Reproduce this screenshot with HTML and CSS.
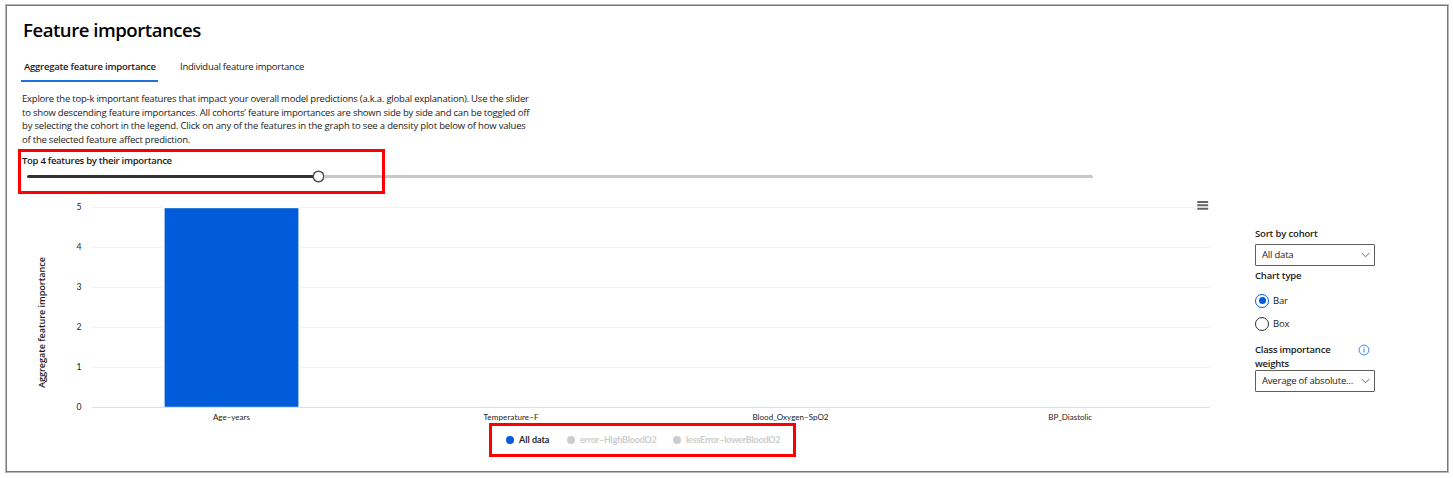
FILE: index.html
```html
<!DOCTYPE html>
<html lang="en">
<head>
<meta charset="utf-8">
<title>Feature importances</title>
<link rel="stylesheet" href="styles.css">
</head>
<body>
<main class="frame">
  <section class="panel">
    <h1 class="title">Feature importances</h1>
    <nav class="tabs">
      <a class="tab tab-active">Aggregate feature importance</a>
      <a class="tab">Individual feature importance</a>
    </nav>
    <p class="intro">
      <span class="line-1">Explore the top-k important features that impact your overall model predictions (a.k.a. global explanation). Use the slider</span><br>
      <span class="line-2">to show descending feature importances. All cohorts’ feature importances are shown side by side and can be toggled off</span><br>
      <span class="line-3">by selecting the cohort in the legend. Click on any of the features in the graph to see a density plot below of how values</span><br>
      <span class="line-4">of the selected feature affect prediction.</span>
    </p>
    <div class="slider-block">
      <div class="label slider-label">Top 4 features by their importance</div>
      <div class="slider"><div class="slider-fill"></div><div class="slider-thumb"></div><div class="slider-rest"></div></div>
      <div class="highlight highlight-slider"></div>
    </div>
    <div class="body">
      <div class="chart">
        <svg class="plot" width="1213" height="232" viewBox="7 194 1213 232">
          <g class="grid">
            <path d="M92 207.5H1194M92 247.5H1210M92 287.5H1210M92 327.5H1210M92 367.5H1210"/>
          </g>
          <path class="axis" d="M92 407.4H1210"/>
          <rect class="bar-halo" x="163" y="206" width="137" height="201"/>
          <rect class="bar" x="164.6" y="208.2" width="133.8" height="198.6"/>
          <g class="tick">
            <text x="79" y="210.3">5</text><text x="79" y="250.3">4</text><text x="79" y="290.3">3</text>
            <text x="79" y="330.3">2</text><text x="79" y="370.3">1</text><text x="79" y="410.3">0</text>
          </g>
          <g class="category">
            <text x="231.4" y="419.8" textLength="37">Age–years</text>
            <text x="511" y="419.8" textLength="55">Temperature–F</text>
            <text x="790.5" y="419.8" textLength="76">Blood_Oxygen–SpO2</text>
            <text x="1070.2" y="419.8" textLength="44">BP_Diastolic</text>
          </g>
          <text class="axis-title" transform="translate(44.6 322.5) rotate(-90)" textLength="131">Aggregate feature importance</text>
          <path class="menu" d="M1197.2 202H1208.2M1197.2 205.3H1208.2M1197.2 208.7H1208.2"/>
        </svg>
        <div class="legend">
          <div class="legend-item item-all"><i class="dot dot-on"></i><span>All data</span></div>
          <div class="legend-item item-high off"><i class="dot"></i><span>error–HighBloodO2</span></div>
          <div class="legend-item off"><i class="dot"></i><span>lessError–lowerBloodO2</span></div>
        </div>
      </div>
      <aside class="options">
        <div class="label">Sort by cohort</div>
        <div class="select"><span>All data</span><svg class="chevron" width="9" height="6" viewBox="0 0 9 6"><path d="M.5 .8L4.5 4.8L8.5 .8"/></svg></div>
        <div class="label type-label">Chart type</div>
        <div class="radio radio-on"><i></i><span>Bar</span></div>
        <div class="radio"><i></i><span>Box</span></div>
        <div class="weights">
          <div class="label weights-label">Class importance<br>weights</div>
          <svg class="info" width="12" height="12" viewBox="0 0 12 12"><circle cx="6" cy="6" r="4.9"/><path d="M6 5.1V8.6M6 3.2V4.2"/></svg>
        </div>
        <div class="select"><span>Average of absolute...</span><svg class="chevron" width="9" height="6" viewBox="0 0 9 6"><path d="M.5 .8L4.5 4.8L8.5 .8"/></svg></div>
      </aside>
    </div>
  </section>
</main>
</body>
</html>
```
FILE: styles.css
```css
* { box-sizing: border-box; }
body { margin: 0; background: #fff; color: #222120; font: 9.5px/14px "Open Sans", "Noto Sans", sans-serif; letter-spacing: -.2px; }
.frame { width: 1444px; height: 469px; margin: 4px 0 0 5px; border: 1px solid #b8b8b8; }
.panel { height: 467px; border: 1px solid #777; display: flex; flex-direction: column; }
.title { margin: 12px 0 0 16px; font-size: 18.6px; line-height: 24px; height: 24px; font-weight: 600; color: #000; letter-spacing: -.48px; white-space: nowrap; }
.tabs { display: flex; margin: 14px 0 0 14px; height: 26px; gap: 14px; }
.tab { height: 25.5px; padding: 3.5px 3px 0; white-space: nowrap; letter-spacing: -.25px; }
.tab-active { width: 137px; font-weight: 600; color: #1b1a19; border-bottom: 2px solid #1f6fe0; letter-spacing: -.23px; }
.tab + .tab { padding-left: 8px; }
.intro { margin: 10px 0 0 15px; line-height: 13.6px; height: 61px; white-space: nowrap; }
.line-1 { letter-spacing: -.215px; }
.line-2 { letter-spacing: -.2px; }
.line-3 { letter-spacing: -.18px; }
.line-4 { letter-spacing: -.22px; }
.label { font-weight: 600; color: #1b1a19; white-space: nowrap; letter-spacing: -.17px; }
.slider-block { position: relative; height: 41px; }
.slider-label { margin: .6px 0 0 15px; height: 14px; letter-spacing: -.28px; }
.slider { display: flex; align-items: center; width: 1066px; height: 12px; margin: 3px 0 0 20px; }
.slider-fill { width: 286px; height: 3px; border-radius: 2px 0 0 2px; background: #333; }
.slider-thumb { width: 11px; height: 11px; border: 1.5px solid #444; border-radius: 50%; background: #fff; box-shadow: 0 0 0 .5px #444; }
.slider-rest { flex: 1; height: 3px; border-radius: 0 2px 2px 0; background: #c8c8c8; }
.highlight { position: absolute; border: 3px solid #f00; }
.highlight-slider { left: 11px; top: -4px; width: 367px; height: 45px; }
.body { display: flex; }
.chart { width: 1220px; }
.plot { display: block; }
.plot text { font-family: "Open Sans", "Noto Sans", sans-serif; text-anchor: middle; fill: #222120; letter-spacing: 0; }
.grid path { stroke: #f1f1f1; fill: none; }
.axis { stroke: #d9dcec; }
.bar-halo { fill: #fff; }
.bar { fill: #015cda; }
.plot .tick text { font-family: Lato, sans-serif; font-size: 8.6px; }
.plot .category text { font-family: Lato, sans-serif; font-size: 8px; }
.plot .axis-title { font-size: 9.2px; font-weight: 600; fill: #1b1a19; }
.menu { stroke: #666; stroke-width: 1.9; }
.legend { display: flex; align-items: center; width: 307px; height: 34px; margin: -3px 0 0 482px; padding-left: 14px; border: 3px solid #f00; font: 700 9px/14px Lato, sans-serif; letter-spacing: -.2px; white-space: nowrap; color: #292827; }
.legend-item { display: flex; align-items: center; gap: 5px; }
.item-all { width: 61px; letter-spacing: 0; }
.item-high { width: 106px; }
.off { color: #ccc; }
.dot { width: 8px; height: 8px; border-radius: 50%; background: #ccc; }
.dot-on { background: #015cda; }
.options { width: 120px; margin: 33px 0 0 28px; }
.select { display: flex; align-items: center; justify-content: space-between; height: 22px; padding: 0 4px 0 6px; border: 1px solid #605e5c; border-radius: 1px; white-space: nowrap; }
.options > .label:first-child { height: 17px; }
.chevron path { fill: none; stroke: #605e5c; stroke-width: .9; }
.type-label { margin-top: 3px; height: 20px; }
.radio { display: flex; align-items: center; gap: 4px; height: 23.4px; }
.radio i { display: flex; align-items: center; justify-content: center; width: 14px; height: 14px; border: 1px solid #323130; border-radius: 50%; }
.radio-on i { border-color: #015cda; }
.radio-on i::before { content: ""; width: 7px; height: 7px; border-radius: 50%; background: #015cda; }
.weights { display: flex; justify-content: space-between; height: 27px; margin-top: 7.2px; padding-right: 5px; }
.weights-label { line-height: 13.6px; letter-spacing: -.22px; }
.info { margin-top: 1px; }
.info circle { fill: none; stroke: #2b78e0; stroke-width: .9; }
.info path { stroke: #2b78e0; stroke-width: 1; }
```
